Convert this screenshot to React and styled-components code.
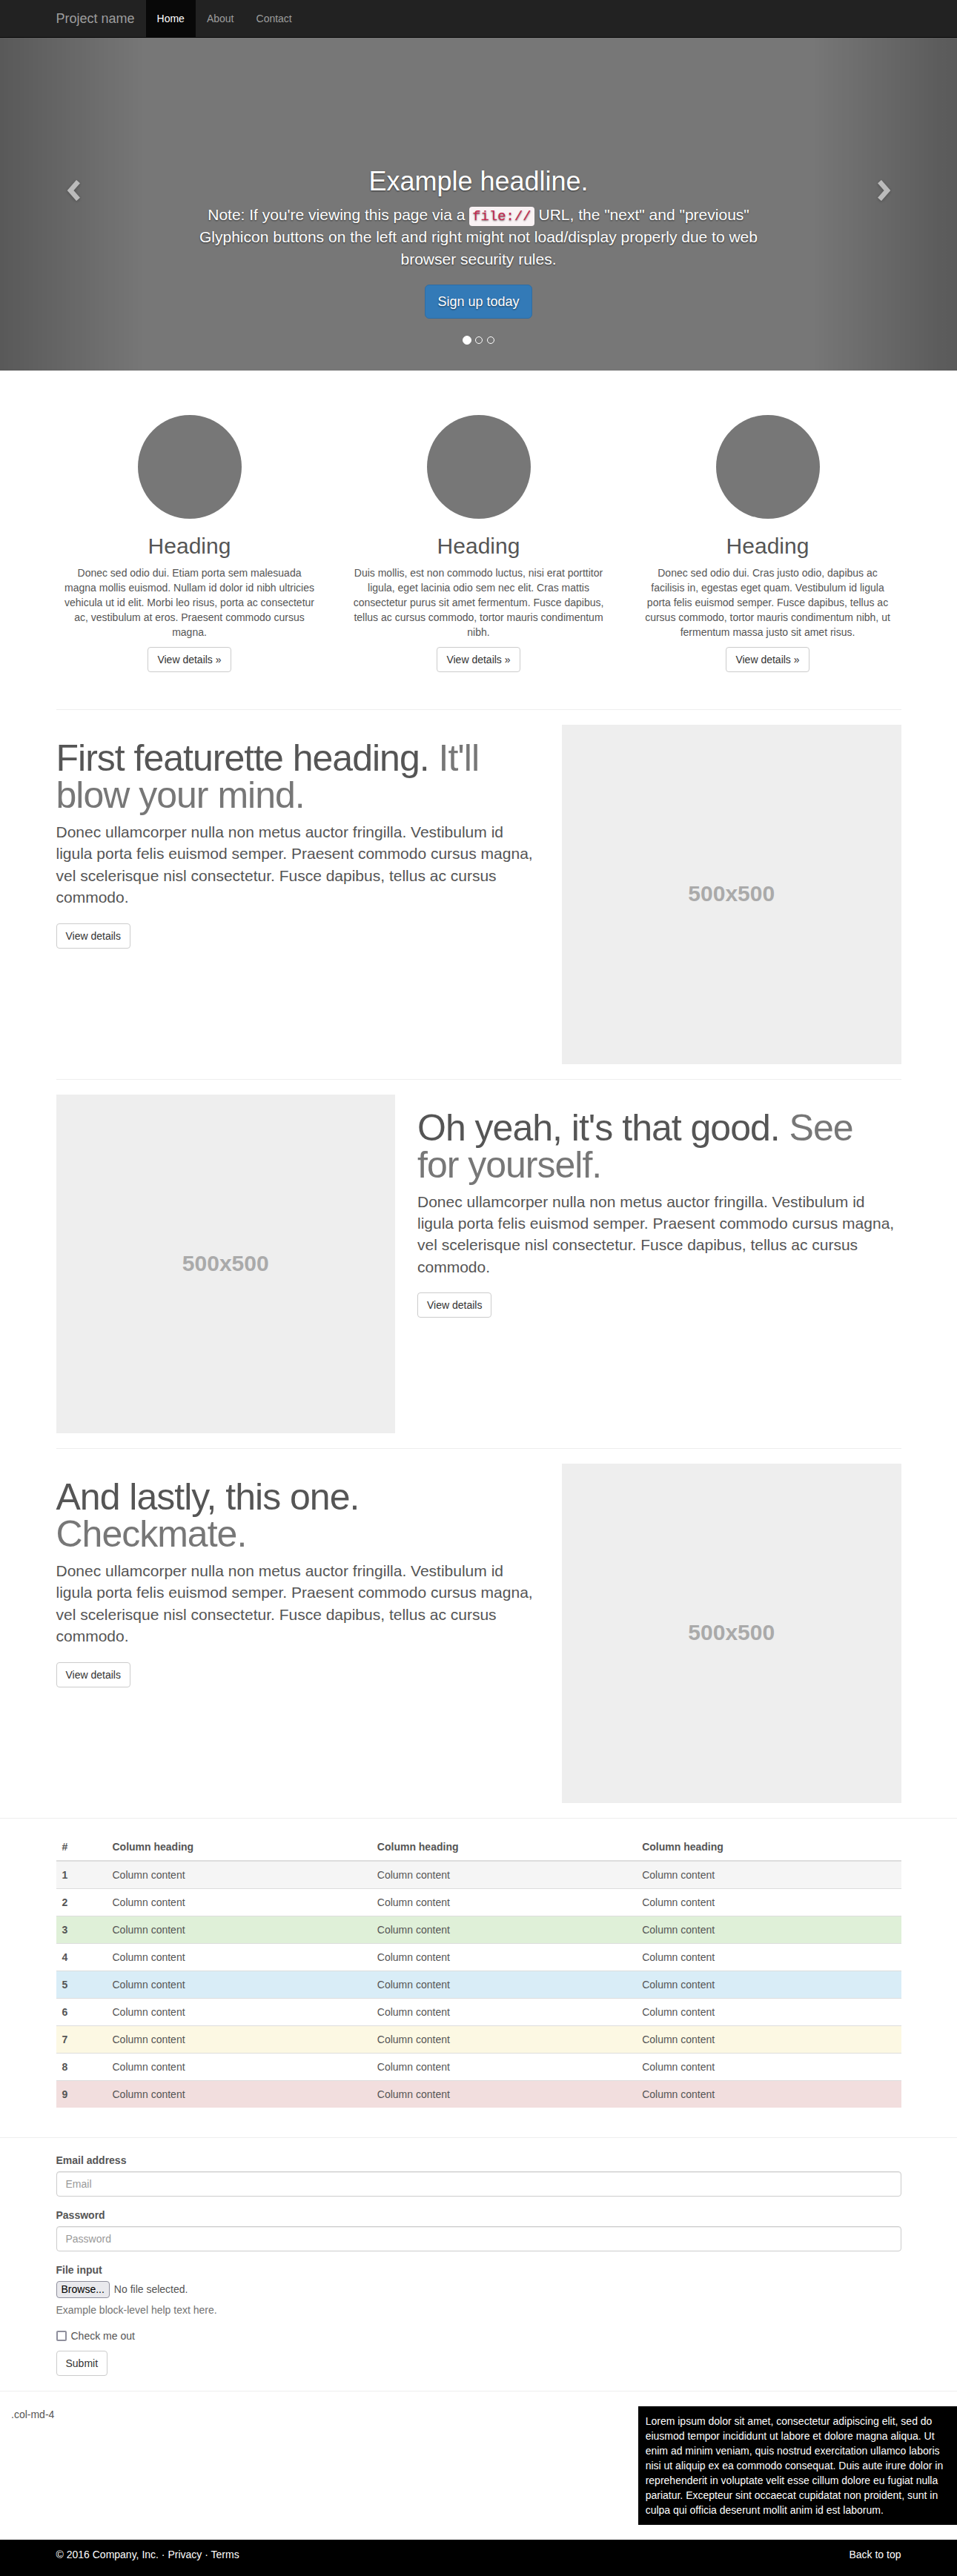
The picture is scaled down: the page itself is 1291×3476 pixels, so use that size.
import React from 'react';
import styled, { createGlobalStyle } from 'styled-components';

const GlobalStyle = createGlobalStyle`
  *, *::before, *::after { box-sizing: border-box; }
  html, body { margin: 0; padding: 0; }
  body {
    font-family: "Liberation Sans", Helvetica, Arial, sans-serif;
    font-size: 14px;
    line-height: 1.428571429;
    color: #555;
    background: #fff;
  }
`;

/* ---------- Navbar ---------- */
const Navbar = styled.nav`
  background: #222;
  border-bottom: 1px solid #080808;
`;
const NavInner = styled.div`
  width: 1170px;
  height: 50px;
  margin: 0 auto;
  display: flex;
`;
const Brand = styled.a`
  padding: 15px;
  font-size: 18px;
  line-height: 20px;
  color: #9d9d9d;
  text-decoration: none;
`;
const NavLink = styled.a`
  padding: 15px;
  line-height: 20px;
  color: ${(p) => (p.$active ? '#fff' : '#9d9d9d')};
  background: ${(p) => (p.$active ? '#080808' : 'transparent')};
  text-decoration: none;
`;

/* ---------- Carousel ---------- */
const Carousel = styled.section`
  position: relative;
  height: 449px;
  background: #777;
  overflow: hidden;
`;
const Slide = styled.div`
  height: 100%;
  display: flex;
  flex-direction: column;
  justify-content: flex-end;
  align-items: center;
  padding: 0 20% 70px;
  text-align: center;
  color: #fff;
  text-shadow: 0 1px 2px rgba(0, 0, 0, 0.6);
`;
const Headline = styled.h1`
  margin: 0 0 10px;
  font-size: 36px;
  font-weight: 500;
  line-height: 1.1;
`;
const CaptionText = styled.p`
  margin: 0 0 20px;
  font-size: 21px;
  line-height: 1.4;
`;
const Code = styled.code`
  padding: 2px 4px;
  font-family: "Liberation Mono", Menlo, Consolas, "Courier New", monospace;
  font-size: 90%;
  color: #c7254e;
  background: #f9f2f4;
  border-radius: 4px;
`;
const PrimaryButton = styled.a`
  display: inline-block;
  padding: 10px 16px;
  font-size: 18px;
  line-height: 1.3333333;
  color: #fff;
  background: #337ab7;
  border: 1px solid #2e6da4;
  border-radius: 6px;
  text-decoration: none;
`;
const Control = styled.a`
  position: absolute;
  top: 0;
  bottom: 0;
  ${(p) => p.$side}: 0;
  width: 15%;
  display: flex;
  justify-content: center;
  align-items: flex-start;
  padding-top: 192px;
  opacity: 0.5;
  background-image: linear-gradient(
    to ${(p) => (p.$side === 'left' ? 'right' : 'left')},
    rgba(0, 0, 0, 0.5) 0%,
    rgba(0, 0, 0, 0.0001) 100%
  );
  svg {
    margin-${(p) => p.$side}: ${(p) => (p.$side === 'left' ? '6px' : '5px')};
    filter: drop-shadow(0 1px 2px rgba(0, 0, 0, 0.6));
  }
`;
const Indicators = styled.div`
  position: absolute;
  left: 0;
  right: 0;
  bottom: 35px;
  height: 12px;
  display: flex;
  justify-content: center;
  align-items: center;
  gap: 4px;
`;
const Dot = styled.span`
  width: ${(p) => (p.$active ? '12px' : '10px')};
  height: ${(p) => (p.$active ? '12px' : '10px')};
  margin: ${(p) => (p.$active ? '0' : '1px')};
  border: 1px solid #fff;
  border-radius: 10px;
  background: ${(p) => (p.$active ? '#fff' : 'transparent')};
`;

const Chevron = ({ dir }) => (
  <svg width="20" height="28" viewBox="0 0 20 28">
    <polyline
      points={dir === 'left' ? '15.5,2 5,14 15.5,26' : '4.5,2 15,14 4.5,26'}
      fill="none"
      stroke="#fff"
      strokeWidth="6.5"
      strokeLinejoin="miter"
    />
  </svg>
);

/* ---------- Layout ---------- */
const Container = styled.div`
  display: flow-root;
  width: 1170px;
  margin: 0 auto;
  padding: ${(p) => (p.$top ? `${p.$top}px` : '0')} 15px 0;
`;
const Row = styled.div`
  display: flex;
  margin: 0 -15px;
`;
const Col = styled.div`
  flex: none;
  width: ${(p) => p.$w};
  padding: 0 15px;
`;
const Divider = styled.hr`
  height: 0;
  margin: 20px 0;
  border: 0;
  border-top: 1px solid #eee;
`;

/* ---------- Marketing ---------- */
const MarketingCol = styled(Col)`
  text-align: center;
  margin-bottom: 20px;
`;
const Circle = styled.div`
  width: 140px;
  height: 140px;
  margin: 0 auto;
  border-radius: 50%;
  background: #777;
`;
const ColHeading = styled.h2`
  margin: 20px 0 10px;
  font-size: 30px;
  font-weight: 400;
  line-height: 1.1;
`;
const ColText = styled.p`
  margin: 0 10px 10px;
`;
const ButtonLine = styled.div`
  display: flex;
  justify-content: ${(p) => (p.$center ? 'center' : 'flex-start')};
  margin-bottom: 10px;
`;
const Button = styled.a`
  display: inline-block;
  padding: 6px 12px;
  font-size: 14px;
  line-height: 1.428571429;
  color: #333;
  background: #fff;
  border: 1px solid #ccc;
  border-radius: 4px;
  text-decoration: none;
  font-family: inherit;
  cursor: pointer;
`;

/* ---------- Featurettes ---------- */
const FeatHeading = styled.h2`
  margin: 20px 0 10px;
  font-size: 50px;
  font-weight: 300;
  line-height: 1;
  letter-spacing: -1px;
`;
const Muted = styled.span`
  color: #777;
`;
const Lead = styled.p`
  margin: 0 0 20px;
  font-size: 21px;
  font-weight: 300;
  line-height: 1.4;
`;
const Placeholder = styled.div`
  width: 100%;
  aspect-ratio: 1 / 1;
  display: flex;
  align-items: center;
  justify-content: center;
  background: #eee;
  color: #aaa;
  font-size: 30px;
  font-weight: 700;
`;

/* ---------- Table ---------- */
const rowColors = {
  active: '#f5f5f5',
  success: '#dff0d8',
  info: '#d9edf7',
  warning: '#fcf8e3',
  danger: '#f2dede',
};
const Table = styled.table`
  width: 100%;
  table-layout: fixed;
  border-collapse: collapse;
  border-spacing: 0;
  margin-bottom: 20px;
`;
const HeadCell = styled.th`
  padding: 8px;
  line-height: 20px;
  text-align: left;
  vertical-align: bottom;
  font-weight: 700;
  border-bottom: 2px solid #ddd;
`;
const BodyRow = styled.tr`
  background: ${(p) => rowColors[p.$variant] || 'transparent'};
`;
const RowHead = styled.th`
  padding: 8px;
  line-height: 20px;
  text-align: left;
  font-weight: 700;
  border-top: 1px solid #ddd;
`;
const Cell = styled.td`
  padding: 8px;
  line-height: 20px;
  border-top: 1px solid #ddd;
`;

/* ---------- Form ---------- */
const FormGroup = styled.div`
  margin-bottom: 15px;
`;
const Label = styled.label`
  display: inline-block;
  margin-bottom: 5px;
  font-weight: 700;
`;
const Input = styled.input`
  display: block;
  width: 100%;
  height: 34px;
  padding: 6px 12px;
  font-family: inherit;
  font-size: 14px;
  line-height: 1.428571429;
  color: #555;
  background: #fff;
  border: 1px solid #ccc;
  border-radius: 4px;
  box-shadow: inset 0 1px 1px rgba(0, 0, 0, 0.075);
  &::placeholder { color: #999; }
`;
const FileRow = styled.div`
  display: flex;
  align-items: flex-start;
  gap: 6px;
  height: 24px;
`;
const BrowseButton = styled.span`
  display: inline-block;
  padding: 2px 6px;
  line-height: 17px;
  font-size: 14px;
  color: #000;
  background: #e9e9ed;
  border: 1px solid #8f8f9d;
  border-radius: 4px;
`;
const FileText = styled.span`
  line-height: 22px;
`;
const HelpBlock = styled.span`
  display: block;
  margin: 5px 0 10px;
  color: #737373;
`;
const CheckRow = styled.div`
  margin: 10px 0;
`;
const CheckLabel = styled.label`
  display: flex;
  align-items: center;
  gap: 6px;
  line-height: 20px;
`;
const CheckBox = styled.input`
  appearance: none;
  width: 14px;
  height: 14px;
  margin: 0;
  border: 2px solid #8f8f9d;
  border-radius: 2px;
  background: #fff;
`;

/* ---------- Info + footer ---------- */
const InfoGrid = styled.div`
  display: grid;
  grid-template-columns: repeat(3, 1fr);
  margin-bottom: 20px;
`;
const InfoLabel = styled.div`
  padding: 1px 15px 0;
`;
const InfoBox = styled.div`
  grid-column: 3;
  padding: 10px;
  background: #000;
  color: #fff;
`;
const Footer = styled.footer`
  height: 50px;
  background: #000;
  color: #fff;
`;
const FooterInner = styled.div`
  width: 1170px;
  margin: 0 auto;
  padding: 10px 15px 0;
  display: flex;
  justify-content: space-between;
`;
const FooterLink = styled.a`
  color: #fff;
  text-decoration: none;
`;

const marketing = [
  'Donec sed odio dui. Etiam porta sem malesuada magna mollis euismod. Nullam id dolor id nibh ultricies vehicula ut id elit. Morbi leo risus, porta ac consectetur ac, vestibulum at eros. Praesent commodo cursus magna.',
  'Duis mollis, est non commodo luctus, nisi erat porttitor ligula, eget lacinia odio sem nec elit. Cras mattis consectetur purus sit amet fermentum. Fusce dapibus, tellus ac cursus commodo, tortor mauris condimentum nibh.',
  'Donec sed odio dui. Cras justo odio, dapibus ac facilisis in, egestas eget quam. Vestibulum id ligula porta felis euismod semper. Fusce dapibus, tellus ac cursus commodo, tortor mauris condimentum nibh, ut fermentum massa justo sit amet risus.',
];

const leadText =
  'Donec ullamcorper nulla non metus auctor fringilla. Vestibulum id ligula porta felis euismod semper. Praesent commodo cursus magna, vel scelerisque nisl consectetur. Fusce dapibus, tellus ac cursus commodo.';

const featurettes = [
  { main: 'First featurette heading.', muted: "It'll blow your mind.", imageLeft: false },
  { main: "Oh yeah, it's that good.", muted: 'See for yourself.', imageLeft: true },
  { main: 'And lastly, this one.', muted: 'Checkmate.', imageLeft: false },
];

const rows = ['active', '', 'success', '', 'info', '', 'warning', '', 'danger'];

function Featurette({ main, muted, imageLeft }) {
  const text = (
    <Col $w="58.333333%">
      <FeatHeading>
        {main} <Muted>{muted}</Muted>
      </FeatHeading>
      <Lead>{leadText}</Lead>
      <ButtonLine>
        <Button>View details</Button>
      </ButtonLine>
    </Col>
  );
  const image = (
    <Col $w="41.666667%">
      <Placeholder>500x500</Placeholder>
    </Col>
  );
  return (
    <Row>
      {imageLeft ? image : text}
      {imageLeft ? text : image}
    </Row>
  );
}

export default function App() {
  return (
    <>
      <GlobalStyle />
      <Navbar>
        <NavInner>
          <Brand href="#">Project name</Brand>
          <NavLink $active href="#">Home</NavLink>
          <NavLink href="#">About</NavLink>
          <NavLink href="#">Contact</NavLink>
        </NavInner>
      </Navbar>

      <Carousel>
        <Slide>
          <Headline>Example headline.</Headline>
          <CaptionText>
            Note: If you're viewing this page via a <Code>file://</Code> URL, the "next" and
            "previous" Glyphicon buttons on the left and right might not load/display properly due
            to web browser security rules.
          </CaptionText>
          <PrimaryButton href="#">Sign up today</PrimaryButton>
        </Slide>
        <Control $side="left" href="#">
          <Chevron dir="left" />
        </Control>
        <Control $side="right" href="#">
          <Chevron dir="right" />
        </Control>
        <Indicators>
          <Dot $active />
          <Dot />
          <Dot />
        </Indicators>
      </Carousel>

      <Container $top={60}>
        <Row>
          {marketing.map((t, i) => (
            <MarketingCol $w="33.333333%" key={i}>
              <Circle />
              <ColHeading>Heading</ColHeading>
              <ColText>{t}</ColText>
              <ButtonLine $center>
                <Button>View details »</Button>
              </ButtonLine>
            </MarketingCol>
          ))}
        </Row>
        {featurettes.map((f, i) => (
          <React.Fragment key={i}>
            <Divider />
            <Featurette {...f} />
          </React.Fragment>
        ))}
      </Container>

      <Divider />

      <Container>
        <Table>
          <colgroup>
            <col style={{ width: 68 }} />
            <col />
            <col />
            <col />
          </colgroup>
          <thead>
            <tr>
              <HeadCell>#</HeadCell>
              <HeadCell>Column heading</HeadCell>
              <HeadCell>Column heading</HeadCell>
              <HeadCell>Column heading</HeadCell>
            </tr>
          </thead>
          <tbody>
            {rows.map((v, i) => (
              <BodyRow $variant={v} key={i}>
                <RowHead>{i + 1}</RowHead>
                <Cell>Column content</Cell>
                <Cell>Column content</Cell>
                <Cell>Column content</Cell>
              </BodyRow>
            ))}
          </tbody>
        </Table>
      </Container>

      <Divider />

      <Container>
        <form onSubmit={(e) => e.preventDefault()}>
          <FormGroup>
            <Label>Email address</Label>
            <Input type="email" placeholder="Email" />
          </FormGroup>
          <FormGroup>
            <Label>Password</Label>
            <Input type="password" placeholder="Password" />
          </FormGroup>
          <FormGroup>
            <Label>File input</Label>
            <FileRow>
              <BrowseButton>Browse...</BrowseButton>
              <FileText>No file selected.</FileText>
            </FileRow>
            <HelpBlock>Example block-level help text here.</HelpBlock>
          </FormGroup>
          <CheckRow>
            <CheckLabel>
              <CheckBox type="checkbox" />
              Check me out
            </CheckLabel>
          </CheckRow>
          <Button as="button" type="submit">Submit</Button>
        </form>
      </Container>

      <Divider />

      <InfoGrid>
        <InfoLabel>.col-md-4</InfoLabel>
        <InfoBox>
          Lorem ipsum dolor sit amet, consectetur adipiscing elit, sed do eiusmod tempor incididunt
          ut labore et dolore magna aliqua. Ut enim ad minim veniam, quis nostrud exercitation
          ullamco laboris nisi ut aliquip ex ea commodo consequat. Duis aute irure dolor in
          reprehenderit in voluptate velit esse cillum dolore eu fugiat nulla pariatur. Excepteur
          sint occaecat cupidatat non proident, sunt in culpa qui officia deserunt mollit anim id est
          laborum.
        </InfoBox>
      </InfoGrid>

      <Footer>
        <FooterInner>
          <span>
            © 2016 Company, Inc. · <FooterLink href="#">Privacy</FooterLink> ·{' '}
            <FooterLink href="#">Terms</FooterLink>
          </span>
          <FooterLink href="#">Back to top</FooterLink>
        </FooterInner>
      </Footer>
    </>
  );
}
